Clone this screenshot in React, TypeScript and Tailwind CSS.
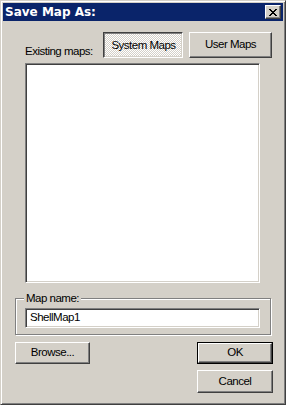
import type { ReactNode } from "react";

const raised =
  "border border-t-white border-l-white border-r-[#404040] border-b-[#404040] bg-[#d4d0c8] shadow-[inset_-1px_-1px_#808080]";
const sunken =
  "border border-t-[#808080] border-l-[#808080] border-r-white border-b-white shadow-[inset_1px_1px_#404040,inset_-1px_-1px_#d4d0c8]";

function Button({ children, className = "" }: { children: ReactNode; className?: string }) {
  return (
    <div className={`flex items-center justify-center ${raised} ${className}`}>
      <span>{children}</span>
    </div>
  );
}

export default function App() {
  return (
    <div
      className="flex h-[405px] w-[286px] flex-col border border-t-[#d4d0c8] border-l-[#d4d0c8] border-r-[#404040] border-b-[#404040] bg-[#d4d0c8] p-[2px] text-[11.5px] tracking-[-0.5px] text-black shadow-[inset_1px_1px_#fff,inset_-1px_-1px_#808080]"
      style={{ fontFamily: '"Liberation Sans", Arial, sans-serif' }}
    >
      {/* title bar */}
      <div className="flex h-[18px] items-center justify-between bg-[#0a246a] pl-[2px] pr-[2px]">
        <span
          className="text-[12px] font-bold tracking-normal text-white"
          style={{ fontFamily: '"DejaVu Sans", Verdana, sans-serif' }}
        >
          Save Map As:
        </span>
        <div className={`flex h-[14px] w-[16px] items-center justify-center ${raised}`}>
          <svg width="8" height="7" viewBox="0 0 8 7" shapeRendering="crispEdges">
            <path d="M0 0h2v1h-2zM6 0h2v1h-2zM1 1h2v1h-2zM5 1h2v1h-2zM2 2h4v1h-4zM3 3h2v1h-2zM2 4h4v1h-4zM1 5h2v1h-2zM5 5h2v1h-2zM0 6h2v1h-2zM6 6h2v1h-2z" fill="#000" />
          </svg>
        </div>
      </div>

      {/* map type row */}
      <div className="mt-[11px] flex h-[26px] items-end">
        <div className="w-[100px] pl-[22px] leading-[13px]">Existing maps:</div>
        <div
          className={`flex h-[26px] w-[80px] items-center justify-center border border-t-[#404040] border-l-[#404040] border-r-white border-b-white bg-[repeating-conic-gradient(#fff_0_25%,#d4d0c8_0_50%)] bg-size-[2px_2px] shadow-[inset_1px_1px_#808080,inset_-1px_-1px_#d4d0c8]`}
        >
          <span className="pt-[1px] pl-[1px]">System Maps</span>
        </div>
        <Button className="ml-[6px] h-[26px] w-[83px]">User Maps</Button>
      </div>

      {/* maps list */}
      <div className={`ml-[22px] mt-[5px] h-[220px] w-[235px] bg-white ${sunken}`} />

      {/* map name group */}
      <div className="relative ml-[12px] mt-[15px] h-[37px] w-[256px] border border-[#808080] pl-[9px] pt-[9px] shadow-[inset_1px_1px_#fff,1px_1px_#fff]">
        <span className="absolute -top-[7px] left-[8px] bg-[#d4d0c8] px-[2px] leading-[13px]">Map name:</span>
        <div className={`flex h-[20px] w-[235px] items-center bg-white pl-[4px] ${sunken}`}>ShellMap1</div>
      </div>

      {/* bottom buttons */}
      <div className="mt-[7px] flex justify-between pl-[12px] pr-[10px]">
        <Button className="h-[22px] w-[75px]">Browse...</Button>
        <div className="flex flex-col gap-[6px]">
          <div className="h-[22px] w-[76px] border border-black">
            <Button className="h-full w-full">OK</Button>
          </div>
          <Button className="h-[23px] w-[76px]">Cancel</Button>
        </div>
      </div>
    </div>
  );
}
